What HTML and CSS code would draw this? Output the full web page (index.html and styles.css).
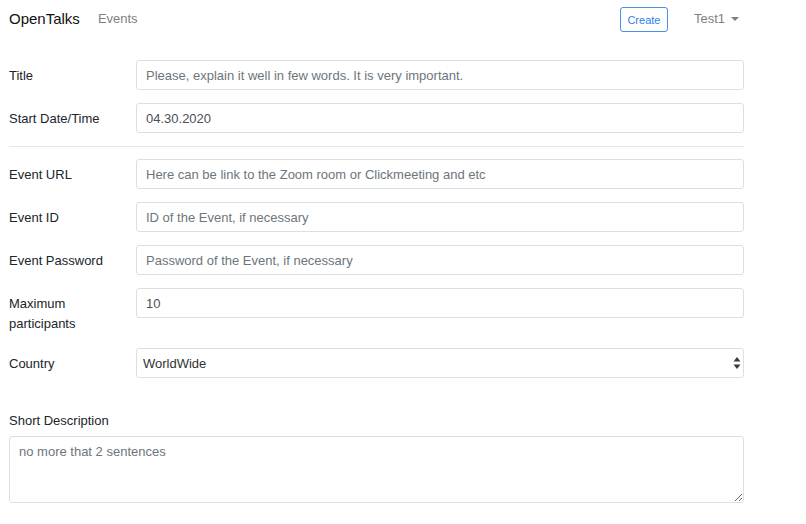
FILE: index.html
```html
<!DOCTYPE html>
<html lang="en">
<head>
<meta charset="utf-8">
<title>OpenTalks - Create Event</title>
<link rel="stylesheet" href="styles.css">
</head>
<body>
<div class="page">
  <nav class="navbar">
    <a class="brand" href="#">OpenTalks</a>
    <a class="nav-link" href="#">Events</a>
    <span class="spacer"></span>
    <button class="btn-create" type="button">Create</button>
    <a class="user" href="#">Test1 <span class="caret"></span></a>
  </nav>
  <form class="form">
    <div class="row">
      <label class="label">Title</label>
      <input class="control" type="text" placeholder="Please, explain it well in few words. It is very important.">
    </div>
    <div class="row">
      <label class="label">Start Date/Time</label>
      <input class="control" type="text" value="04.30.2020">
    </div>
    <hr class="divider">
    <div class="row">
      <label class="label">Event URL</label>
      <input class="control" type="text" placeholder="Here can be link to the Zoom room or Clickmeeting and etc">
    </div>
    <div class="row">
      <label class="label">Event ID</label>
      <input class="control" type="text" placeholder="ID of the Event, if necessary">
    </div>
    <div class="row">
      <label class="label">Event Password</label>
      <input class="control" type="text" placeholder="Password of the Event, if necessary">
    </div>
    <div class="row">
      <label class="label">Maximum participants</label>
      <input class="control" type="text" value="10">
    </div>
    <div class="row">
      <label class="label">Country</label>
      <div class="select-wrap">
        <select class="control select">
          <option>WorldWide</option>
        </select>
        <svg class="select-arrows" width="8" height="14" viewBox="0 0 8 14" aria-hidden="true">
          <path d="M4 1 L7.5 5.5 L0.5 5.5 Z" fill="#3a3a3a"/>
          <path d="M4 13 L7.5 8.5 L0.5 8.5 Z" fill="#3a3a3a"/>
        </svg>
      </div>
    </div>
    <div class="block">
      <label class="block-label">Short Description</label>
      <textarea class="control textarea" placeholder="no more that 2 sentences"></textarea>
    </div>
  </form>
</div>
</body>
</html>
```

FILE: styles.css
```css
* { box-sizing: border-box; }
html, body { margin: 0; padding: 0; background: #fff; }
body {
  font-family: "Liberation Sans", Arial, Helvetica, sans-serif;
  font-size: 13px;
  color: #212529;
}
.page {
  width: 735px;
  margin-left: 9px;
}
.navbar {
  display: flex;
  align-items: center;
  height: 39px;
}
.brand {
  font-size: 15px;
  color: #111;
  text-decoration: none;
  margin-right: 18px;
  position: relative;
  top: -1px;
}
.nav-link {
  color: #7f7f7f;
  text-decoration: none;
  font-size: 13px;
  position: relative;
  top: -1px;
}
.spacer { flex: 1; }
.btn-create {
  font-family: inherit;
  font-size: 11px;
  color: #2f80ed;
  background: #fff;
  border: 1px solid #4a90e2;
  border-radius: 3px;
  width: 48px;
  height: 25px;
  padding: 0;
  margin-right: 26px;
  margin-top: 0;
}
.user {
  display: flex;
  align-items: center;
  color: #7f7f7f;
  text-decoration: none;
  font-size: 13px;
  margin-right: 5px;
  position: relative;
  top: -1px;
}
.caret {
  display: inline-block;
  width: 0;
  height: 0;
  margin-left: 6px;
  border-left: 4px solid transparent;
  border-right: 4px solid transparent;
  border-top: 4px solid #7f7f7f;
}
.form {
  padding-top: 21px;
}
.row {
  display: grid;
  grid-template-columns: 127px 608px;
  margin-bottom: 13px;
}
.label {
  padding: 6px 8px 1px 0;
  line-height: 20px;
  font-size: 13px;
}
.control {
  width: 100%;
  height: 30px;
  font-family: inherit;
  font-size: 13px;
  color: #495057;
  background: #fff;
  border: 1px solid #dcdfe3;
  border-radius: 3px;
  padding: 0 9px;
  margin: 0;
  outline: none;
}
.control::placeholder { color: #6c757d; opacity: 1; }
.divider {
  border: 0;
  border-top: 1px solid #e6e6e6;
  margin: 0 0 12px 0;
}
.select-wrap {
  position: relative;
}
.select {
  -webkit-appearance: none;
  appearance: none;
  padding: 0 6px;
  color: #333;
}
.select-arrows {
  position: absolute;
  right: 3px;
  top: 8px;
  pointer-events: none;
}
.block {
  margin-top: 33px;
}
.block-label {
  display: block;
  line-height: 19px;
  margin-bottom: 6px;
}
.textarea {
  display: block;
  height: 67px;
  padding: 5px 9px;
  line-height: 19px;
  resize: vertical;
}
```
